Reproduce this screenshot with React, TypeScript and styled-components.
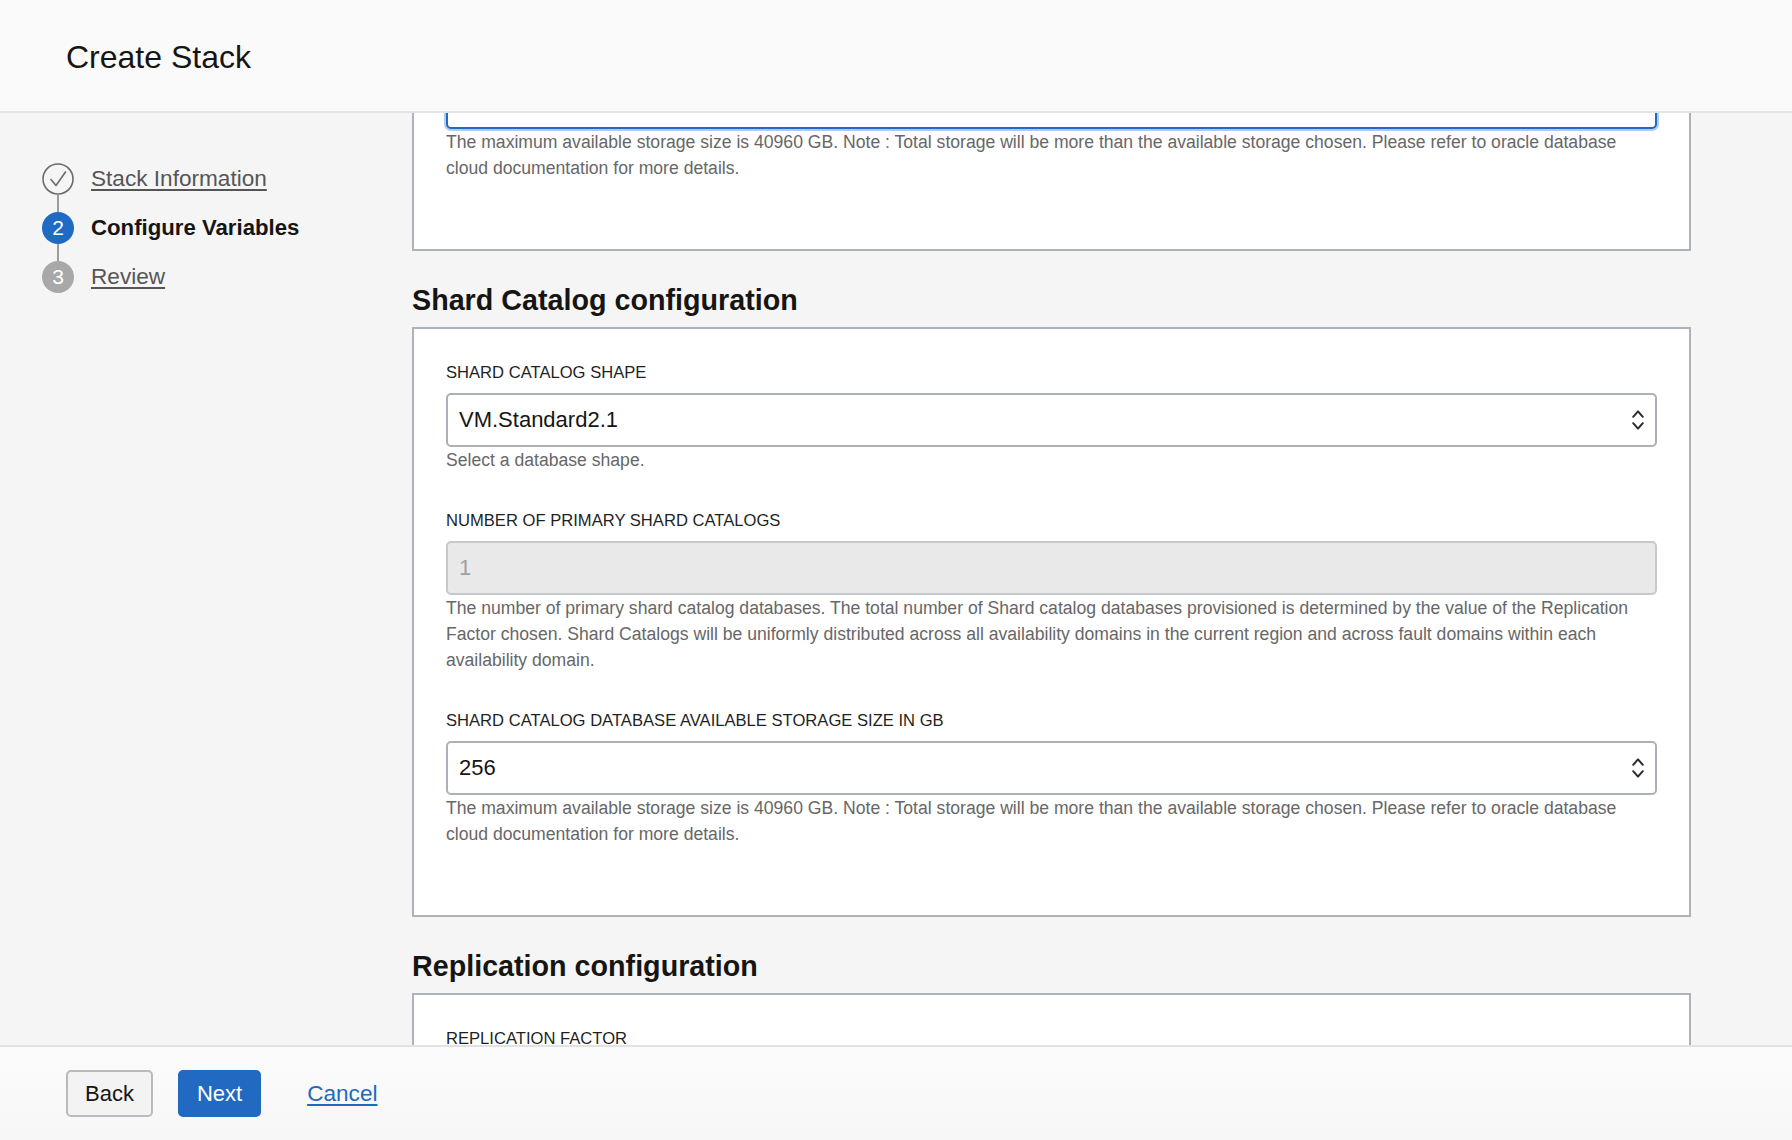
import React, { useLayoutEffect, useRef } from "react";
import styled, { createGlobalStyle, css } from "styled-components";

const GlobalStyle = createGlobalStyle`
  html, body { margin: 0; padding: 0; height: 100%; }
  body {
    font-family: "Liberation Sans", Arial, Helvetica, sans-serif;
    color: #161513;
    background: #f5f5f5;
  }
  * { box-sizing: border-box; }
`;

const Page = styled.div`
  height: 100vh;
  display: flex;
  flex-direction: column;
  background: #f5f5f5;
`;

const Header = styled.header`
  height: 113px;
  flex-shrink: 0;
  display: flex;
  align-items: center;
  padding: 4px 0 0 66px;
  background: #fafafa;
  border-bottom: 2px solid #e4e4e4;
`;

const PageTitle = styled.h1`
  margin: 0;
  font-size: 32px;
  font-weight: 400;
  color: #161513;
`;

const Body = styled.div`
  flex: 1;
  min-height: 0;
  display: flex;
`;

const Sidebar = styled.nav`
  width: 412px;
  flex-shrink: 0;
  padding: 50px 0 0 42px;
`;

const Steps = styled.ol`
  list-style: none;
  margin: 0;
  padding: 0;
`;

const Step = styled.li`
  display: flex;
  align-items: center;
  gap: 17px;
  height: 32px;
`;

const Connector = styled.li`
  width: 2px;
  height: 17px;
  margin-left: 15px;
  background: #9c9c9c;
`;

type StepState = "done" | "current" | "todo";

const Circle = styled.span<{ $state: StepState }>`
  width: 32px;
  height: 32px;
  border-radius: 50%;
  flex-shrink: 0;
  display: flex;
  align-items: center;
  justify-content: center;
  font-size: 21px;
  color: #fff;
  ${(p) =>
    p.$state === "current"
      ? css`background: #1f6bc3;`
      : p.$state === "todo"
      ? css`background: #a8a8a8;`
      : css`background: transparent;`}
`;

const StepLabel = styled.a<{ $current?: boolean }>`
  ${(p) =>
    p.$current
      ? css`
          font-size: 22.2px;
          font-weight: 700;
          color: #161513;
          text-decoration: none;
        `
      : css`
          font-size: 22.6px;
          color: #555555;
          text-decoration: underline;
          text-underline-offset: 3px;
        `}
`;

const Main = styled.main`
  flex: 1;
  min-width: 0;
  position: relative;
  overflow-y: auto;
  padding: 0 101px 60px 0;
  scrollbar-width: none;
  &::-webkit-scrollbar { display: none; }
`;

const SectionTitle = styled.h2`
  margin: 32px 0 10px;
  font-size: 28.7px;
  line-height: 34px;
  font-weight: 700;
  color: #161513;
`;

const Card = styled.section`
  background: #fff;
  border: 2px solid #adb3b9;
  padding: 32px 32px 32px;
`;

const Field = styled.div`
  margin-bottom: 36px;
`;

const Label = styled.label`
  display: block;
  font-size: 16.6px;
  line-height: 23px;
  text-transform: uppercase;
  color: #1f1f1f;
  margin-bottom: 9px;
`;

const InputBox = styled.div<{ $disabled?: boolean; $focused?: boolean }>`
  height: 54px;
  display: flex;
  align-items: center;
  padding: 0 11px 0 11px;
  border: 2px solid #abb1b7;
  border-radius: 5px;
  background: #fff;
  font-size: 22px;
  color: #161513;
  ${(p) =>
    p.$disabled &&
    css`
      background: #e9e9e9;
      border-color: #c6c9cc;
      color: #a0a0a0;
    `}
  ${(p) =>
    p.$focused &&
    css`
      border-color: #1f6bc3;
      box-shadow: 0 0 0 2px rgba(31, 107, 195, 0.35);
    `}
`;

const Value = styled.span`
  flex: 1;
`;

const Help = styled.p`
  margin: 0;
  font-size: 17.6px;
  line-height: 26px;
  color: #676767;
`;

const Footer = styled.footer`
  height: 95px;
  flex-shrink: 0;
  display: flex;
  align-items: center;
  padding-left: 66px;
  background: linear-gradient(#fbfbfb, #f7f7f7);
  border-top: 2px solid #e2e2e2;
`;

const Actions = styled.div`
  display: flex;
  align-items: center;
  gap: 25px;
`;

const Button = styled.button<{ $primary?: boolean }>`
  height: 47px;
  padding: 0 17px;
  font-family: inherit;
  font-size: 22px;
  border-radius: 5px;
  border: 2px solid #b7bbbf;
  background: #f3f3f3;
  color: #161513;
  cursor: pointer;
  ${(p) =>
    p.$primary &&
    css`
      background: #2169c1;
      border-color: #2169c1;
      color: #fff;
    `}
`;

const CancelLink = styled.a`
  margin-left: 46px;
  font-size: 22.6px;
  color: #2169c1;
  text-decoration: underline;
  text-underline-offset: 3px;
`;

const Spinner = () => (
  <svg width="12" height="22" viewBox="0 0 12 22" fill="none">
    <path d="M1.2 7.8 L6 2.4 L10.8 7.8" stroke="#2b2b2b" strokeWidth="2" strokeLinecap="round" strokeLinejoin="round" />
    <path d="M1.2 14.2 L6 19.6 L10.8 14.2" stroke="#2b2b2b" strokeWidth="2" strokeLinecap="round" strokeLinejoin="round" />
  </svg>
);

const CheckCircle = () => (
  <svg width="32" height="32" viewBox="0 0 32 32" fill="none">
    <circle cx="16" cy="16" r="15" stroke="#6b6b6b" strokeWidth="1.6" />
    <path d="M9 16.5 L14 22.5 L23.5 9" stroke="#6b6b6b" strokeWidth="1.6" strokeLinecap="round" strokeLinejoin="round" />
  </svg>
);

const STORAGE_HELP =
  "The maximum available storage size is 40960 GB. Note : Total storage will be more than the available storage chosen. Please refer to oracle database cloud documentation for more details.";

export default function App() {
  const mainRef = useRef<HTMLElement>(null);
  const focusRef = useRef<HTMLDivElement>(null);

  useLayoutEffect(() => {
    const m = mainRef.current;
    const f = focusRef.current;
    if (m && f) {
      m.scrollTop = f.offsetTop + f.offsetHeight - 16;
    }
  }, []);

  return (
    <>
      <GlobalStyle />
      <Page>
        <Header>
          <PageTitle>Create Stack</PageTitle>
        </Header>
        <Body>
          <Sidebar>
            <Steps>
              <Step>
                <Circle $state="done">
                  <CheckCircle />
                </Circle>
                <StepLabel href="#">Stack Information</StepLabel>
              </Step>
              <Connector aria-hidden />
              <Step>
                <Circle $state="current">2</Circle>
                <StepLabel $current>Configure Variables</StepLabel>
              </Step>
              <Connector aria-hidden />
              <Step>
                <Circle $state="todo">3</Circle>
                <StepLabel href="#">Review</StepLabel>
              </Step>
            </Steps>
          </Sidebar>
          <Main ref={mainRef}>
            <SectionTitle>Shard configuration</SectionTitle>
            <Card>
              <Field>
                <Label>Shard shape</Label>
                <InputBox>
                  <Value>VM.Standard2.1</Value>
                  <Spinner />
                </InputBox>
                <Help>Select a database shape.</Help>
              </Field>
              <Field>
                <Label>Shard database available storage size in GB</Label>
                <InputBox $focused ref={focusRef}>
                  <Value>256</Value>
                  <Spinner />
                </InputBox>
                <Help>{STORAGE_HELP}</Help>
              </Field>
            </Card>

            <SectionTitle>Shard Catalog configuration</SectionTitle>
            <Card>
              <Field>
                <Label>Shard catalog shape</Label>
                <InputBox>
                  <Value>VM.Standard2.1</Value>
                  <Spinner />
                </InputBox>
                <Help>Select a database shape.</Help>
              </Field>
              <Field>
                <Label>Number of primary shard catalogs</Label>
                <InputBox $disabled>
                  <Value>1</Value>
                </InputBox>
                <Help>
                  The number of primary shard catalog databases. The total number of Shard catalog databases
                  provisioned is determined by the value of the Replication Factor chosen. Shard Catalogs will be
                  uniformly distributed across all availability domains in the current region and across fault
                  domains within each availability domain.
                </Help>
              </Field>
              <Field>
                <Label>Shard catalog database available storage size in GB</Label>
                <InputBox>
                  <Value>256</Value>
                  <Spinner />
                </InputBox>
                <Help>{STORAGE_HELP}</Help>
              </Field>
            </Card>

            <SectionTitle>Replication configuration</SectionTitle>
            <Card>
              <Field>
                <Label>Replication factor</Label>
                <InputBox>
                  <Value>3</Value>
                  <Spinner />
                </InputBox>
                <Help>The number of copies of data maintained for each shard.</Help>
              </Field>
            </Card>
          </Main>
        </Body>
        <Footer>
          <Actions>
            <Button>Back</Button>
            <Button $primary>Next</Button>
          </Actions>
          <CancelLink href="#">Cancel</CancelLink>
        </Footer>
      </Page>
    </>
  );
}
